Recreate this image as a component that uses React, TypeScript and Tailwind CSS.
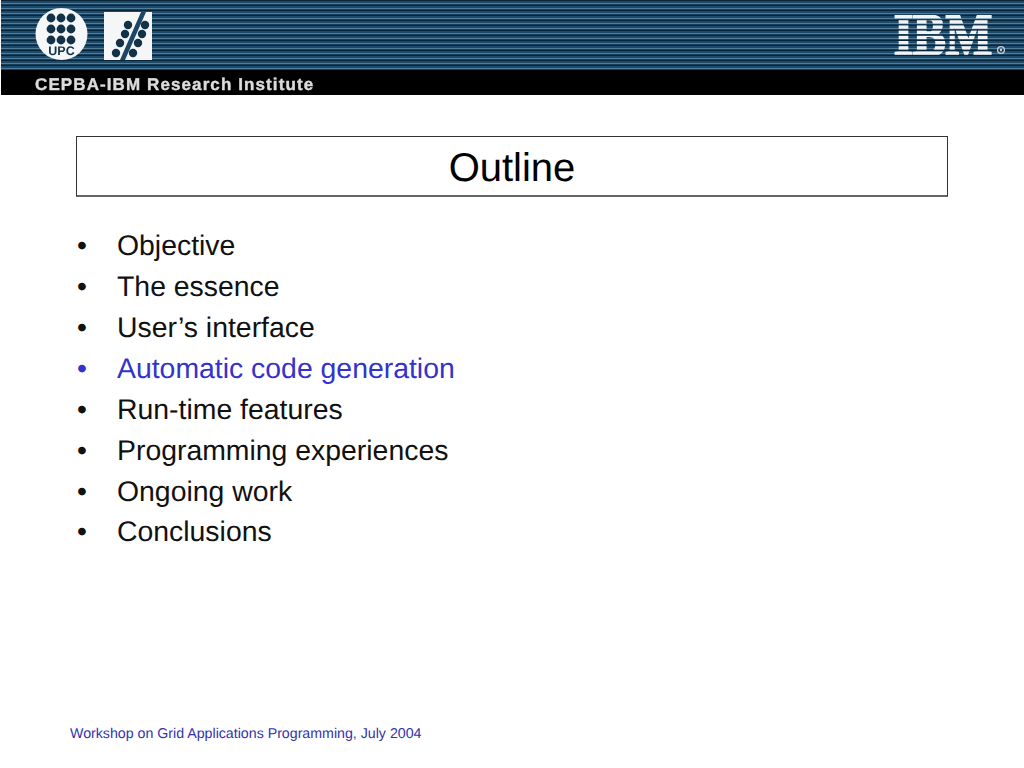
const items = [
  { t: "Objective" },
  { t: "The essence" },
  { t: "User’s interface" },
  { t: "Automatic code generation", blue: true },
  { t: "Run-time features" },
  { t: "Programming experiences" },
  { t: "Ongoing work" },
  { t: "Conclusions" },
];

function UpcLogo() {
  const cols = [16, 26, 36];
  const rows = [10, 21, 32];
  return (
    <svg width="54" height="54" viewBox="0 0 54 54" className="shrink-0 mb-[2px] blur-[0.5px]">
      <circle cx="26.5" cy="26" r="26" fill="#f4f6f7" />
      {rows.map((y) =>
        cols.map((x) => <circle key={`${x}-${y}`} cx={x} cy={y} r="4.4" fill="#143247" />)
      )}
      <text
        x="26.5"
        y="47"
        textAnchor="middle"
        fontFamily="Liberation Sans"
        fontWeight="700"
        fontSize="12.5"
        fill="#143247"
      >
        UPC
      </text>
    </svg>
  );
}

function SlashLogo() {
  const dots = [
    [24, 13], [41, 13], [21, 22], [38, 22], [16, 31], [34, 31], [12, 41], [29, 41],
  ];
  return (
    <svg width="48" height="48" viewBox="0 0 48 48" className="shrink-0 blur-[0.5px]">
      <path d="M0 0H48V48H0Z" fill="#f4f6f7" />
      <path d="M37 0H42L21 48H16Z" fill="#1d4666" />
      {dots.map(([x, y]) => (
        <circle key={`${x}-${y}`} cx={x} cy={y} r="4.2" fill="#143247" />
      ))}
    </svg>
  );
}

function IbmLogo() {
  const bars = [0, 5.2, 10.4, 15.6, 20.8, 26, 31.2, 36.4];
  return (
    <svg width="112" height="42" viewBox="0 0 112 42" className="shrink-0 overflow-visible blur-[0.5px]">
      <defs>
        <mask id="ibm-bars" maskUnits="userSpaceOnUse" x="-2" y="-2" width="106" height="46">
          {bars.map((y) => (
            <rect key={y} x="-2" y={y} width="104" height="3.4" fill="#fff" />
          ))}
        </mask>
      </defs>
      <g mask="url(#ibm-bars)">
        <text
          x="0"
          y="40"
          textLength="98"
          lengthAdjust="spacingAndGlyphs"
          fontFamily="Liberation Serif"
          fontWeight="700"
          fontSize="60"
          fill="#f1f4f6"
          stroke="#f1f4f6"
          strokeWidth="2.5"
        >
          IBM
        </text>
      </g>
      <circle cx="107" cy="35" r="3.4" fill="none" stroke="#c9d2d8" strokeWidth="1.3" />
      <circle cx="107" cy="35" r="1.2" fill="#c9d2d8" />
    </svg>
  );
}

export default function App() {
  return (
    <div className="w-[1024px] h-[768px] bg-white flex flex-col overflow-hidden font-['Liberation_Sans',Arial,sans-serif] [text-rendering:geometricPrecision]">
      <header className="h-[95px] ml-px flex flex-col shrink-0">
        <div className="h-[70px] flex items-center justify-between pl-[34px] pr-[18px] bg-[repeating-linear-gradient(to_bottom,#0a2438_0px,#0a2438_1px,#1b4a6b_1px,#1b4a6b_3px,#4f7f9c_3px,#4f7f9c_4px,#163d59_4px,#163d59_5px)]">
          <div className="flex items-center gap-[15px] pt-[2px]">
            <UpcLogo />
            <SlashLogo />
          </div>
          <div className="pt-[2px]">
            <IbmLogo />
          </div>
        </div>
        <div className="h-[25px] bg-black flex items-center pl-[34px]">
          <span className="text-[17px] font-bold tracking-[1.1px] text-[#dcdcdc] blur-[0.5px] leading-none pt-[4px] [-webkit-text-stroke:0.4px_#dcdcdc]">
            CEPBA-IBM Research Institute
          </span>
        </div>
      </header>

      <main className="flex-1 flex flex-col px-[76px] pt-[41px]">
        <div className="h-[61px] w-[872px] border border-[#333333] border-b-2 border-b-[#666666] flex items-center justify-center shrink-0">
          <h1 className="text-[40px] leading-none text-black pt-[3px]">Outline</h1>
        </div>
        <ul className="mt-[29px] flex flex-col">
          {items.map((i) => (
            <li
              key={i.t}
              className={`flex h-[40.9px] items-center text-[28.4px] leading-none ${i.blue ? "text-[#3333cc]" : "text-[#111111]"}`}
            >
              <span className="w-[41px] shrink-0 pl-[1px]">•</span>
              <span>{i.t}</span>
            </li>
          ))}
        </ul>
        <footer className="mt-auto mb-[26px] -ml-[6px] text-[14.2px] leading-[16px] text-[#3333aa]">
          Workshop on Grid Applications Programming, July 2004
        </footer>
      </main>
    </div>
  );
}
